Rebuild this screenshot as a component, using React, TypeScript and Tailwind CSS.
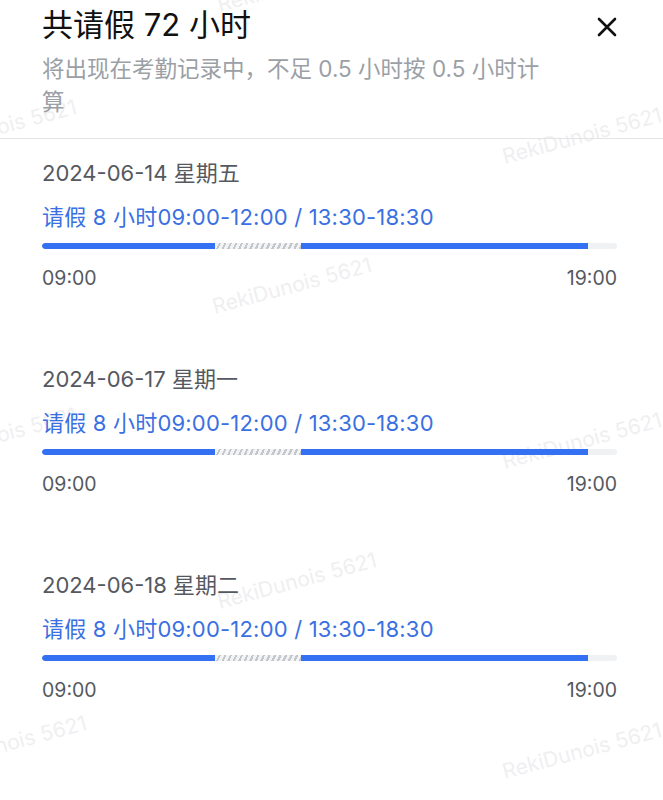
import React from 'react';

const days = [
  { date: '2024-06-14', week: '星期五' },
  { date: '2024-06-17', week: '星期一' },
  { date: '2024-06-18', week: '星期二' },
];

// faint tiled user watermark
const marks = [
  { left: -85, top: 112 },
  { left: 215, top: -32 },
  { left: 500, top: 120 },
  { left: 210, top: 270 },
  { left: -85, top: 420 },
  { left: 500, top: 425 },
  { left: 215, top: 565 },
  { left: -75, top: 728 },
  { left: 500, top: 735 },
];

const font = { fontFamily: 'Inter, "Noto Sans CJK SC", sans-serif' };

const DayRow: React.FC<{ date: string; week: string }> = ({ date, week }) => (
  <div className="flex flex-col">
    <div className="text-[22px] leading-[28px] text-[#55595f]">
      {date} {week}
    </div>
    <div className="mt-[15px] text-[22px] leading-[30px] tracking-[0.2px] text-[#3a70e2]">
      请假 8 小时09:00-12:00 / 13:30-18:30
    </div>
    {/* 09:00 - 19:00 timeline, 57.5px per hour */}
    <div className="mt-[11px] flex h-[6px] w-full overflow-hidden rounded-full bg-[#f0f1f3]">
      <div className="h-full w-[30%] rounded-l-full bg-[#3371f2]" />
      <div className="h-full w-[15%] bg-[repeating-linear-gradient(-65deg,#c3c6cb_0px,#c3c6cb_2px,#f2f3f5_2px,#f2f3f5_5px)]" />
      <div className="h-full w-[50%] bg-[#3371f2]" />
    </div>
    <div className="mt-[16px] flex justify-between text-[19.5px] leading-[26px] text-[#55595f]">
      <span>09:00</span>
      <span>19:00</span>
    </div>
  </div>
);

export default function App() {
  return (
    <div className="relative h-[800px] w-[663px] overflow-hidden bg-white" style={font}>
      {marks.map((m, i) => (
        <div
          key={i}
          className="pointer-events-none absolute -rotate-[15deg] whitespace-nowrap text-[21px] text-[#efeff1]"
          style={{ left: m.left, top: m.top }}
        >
          RekiDunois 5621
        </div>
      ))}
      <div className="relative px-[46px] pl-[42px]">
        <div className="flex items-center justify-between pt-[5px]">
          <h1 className="text-[31px] font-normal leading-[40px] text-[#111]">共请假 72 小时</h1>
          <svg width="22" height="22" viewBox="0 0 22 22" className="mt-[4px] mr-[-1px]">
            <path d="M3 3 L19 19 M19 3 L3 19" stroke="#111" strokeWidth="2.6" strokeLinecap="round" />
          </svg>
        </div>
        <p className="mt-[7px] w-[510px] text-[22.5px] leading-[33px] text-[#9b9fa6]">
          将出现在考勤记录中，不足 0.5 小时按 0.5 小时计算
        </p>
      </div>
      <div className="relative mt-[20px] h-px w-full bg-[#e3e4e6]" />
      <div className="relative flex flex-col gap-[74px] pl-[42px] pr-[46px] pt-[20px]">
        {days.map((d) => (
          <DayRow key={d.date} date={d.date} week={d.week} />
        ))}
      </div>
    </div>
  );
}
